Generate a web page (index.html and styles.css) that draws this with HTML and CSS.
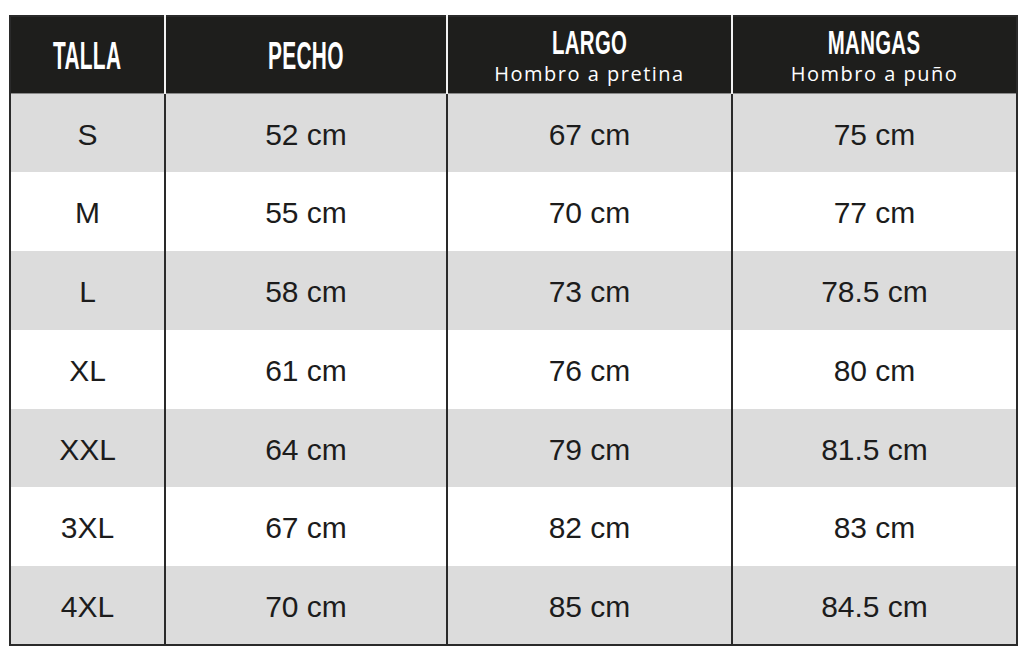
FILE: index.html
```html
<!DOCTYPE html>
<html lang="es">
<head>
<meta charset="utf-8">
<title>Tabla de tallas</title>
<link rel="stylesheet" href="styles.css">
</head>
<body>
<div class="wrap">
<table class="sizes">
  <colgroup>
    <col class="c1"><col class="c2"><col class="c3"><col class="c4">
  </colgroup>
  <thead>
    <tr>
      <th><span class="title big">TALLA</span></th>
      <th><span class="title big">PECHO</span></th>
      <th><span class="title">LARGO</span><span class="sub">Hombro a pretina</span></th>
      <th><span class="title">MANGAS</span><span class="sub">Hombro a puño</span></th>
    </tr>
  </thead>
  <tbody>
    <tr class="g"><td>S</td><td>52 cm</td><td>67 cm</td><td>75 cm</td></tr>
    <tr><td>M</td><td>55 cm</td><td>70 cm</td><td>77 cm</td></tr>
    <tr class="g"><td>L</td><td>58 cm</td><td>73 cm</td><td>78.5 cm</td></tr>
    <tr><td>XL</td><td>61 cm</td><td>76 cm</td><td>80 cm</td></tr>
    <tr class="g"><td>XXL</td><td>64 cm</td><td>79 cm</td><td>81.5 cm</td></tr>
    <tr><td>3XL</td><td>67 cm</td><td>82 cm</td><td>83 cm</td></tr>
    <tr class="g"><td>4XL</td><td>70 cm</td><td>85 cm</td><td>84.5 cm</td></tr>
  </tbody>
</table>
</div>
</body>
</html>
```
FILE: styles.css
```css
html, body {
  margin: 0;
  padding: 0;
  background: #ffffff;
}
.wrap {
  padding: 15px 0 0 9px;
}
.sizes {
  border-collapse: collapse;
  table-layout: fixed;
  width: 1007px;
  border: 2px solid #2a2a2a;
}
.c1 { width: 155px; }
.c2 { width: 282px; }
.c3 { width: 285px; }
.c4 { width: 285px; }

.sizes th {
  background: #1e1e1c;
  color: #ffffff;
  height: 76px;
  padding: 0;
  text-align: center;
  vertical-align: middle;
  border-left: 2px solid #f2f2f2;
  border-bottom: 1px solid #8a8a8a;
}
.sizes th:first-child { border-left: 2px solid #2a2a2a; }

.title {
  display: inline-block;
  font-family: "Liberation Sans", Arial, sans-serif;
  font-weight: 700;
  font-size: 34px;
  line-height: 26px;
  transform: scaleX(0.6);
  letter-spacing: 0.5px;
}
.title.big {
  font-size: 38px;
  line-height: 32px;
  transform: scaleX(0.55);
  margin-top: 2px;
}
.sub {
  display: block;
  font-family: "Open Sans", "DejaVu Sans", sans-serif;
  font-weight: 500;
  font-size: 20px;
  line-height: 22px;
  letter-spacing: 1.5px;
  margin-top: 5px;
  margin-bottom: -3px;
}

.sizes td {
  height: 78.8px;
  padding: 3px 0 0 0;
  box-sizing: border-box;
  text-align: center;
  vertical-align: middle;
  font-family: "Liberation Sans", Arial, sans-serif;
  font-size: 30px;
  color: #1c1c1c;
  background: #ffffff;
  border-left: 2px solid #2a2a2a;
}
.sizes tr.g td { background: #dcdcdc; }
```
